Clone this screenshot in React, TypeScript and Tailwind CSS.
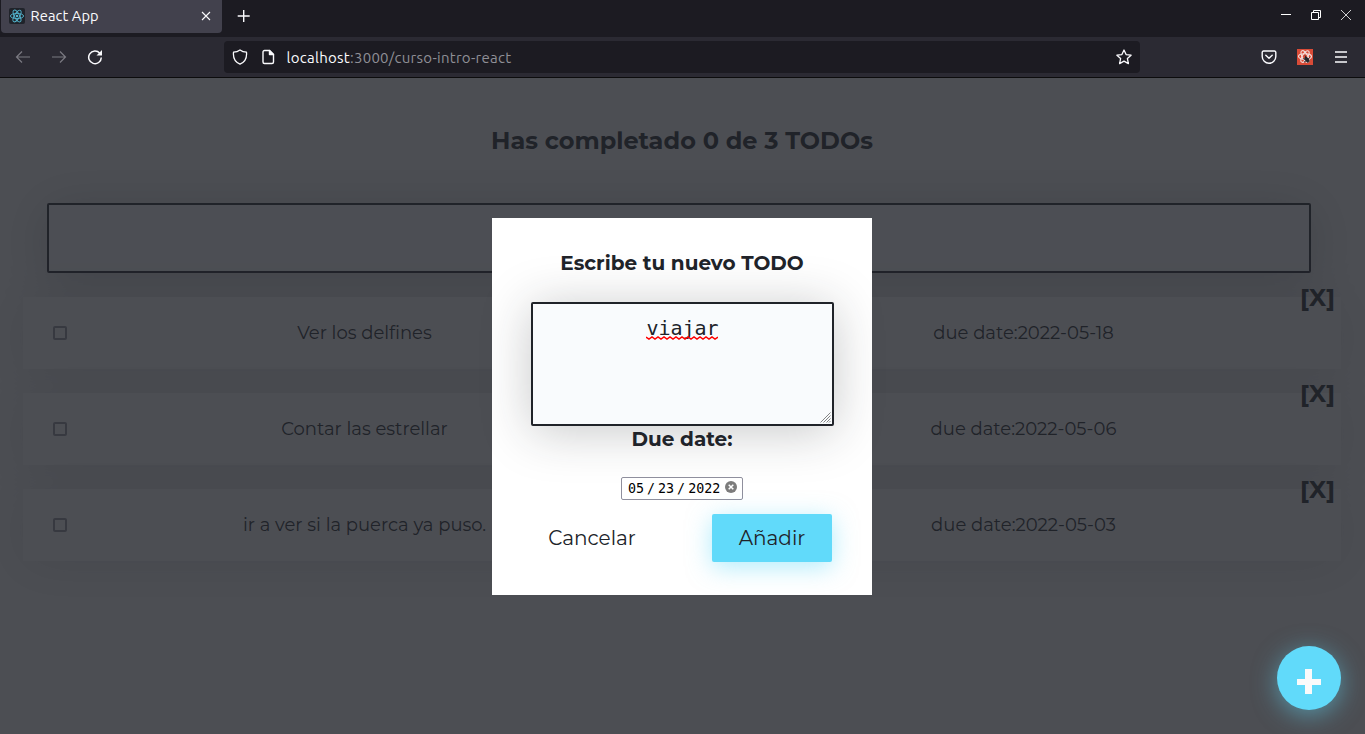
import React from "react";

const todos = [
  { text: "Ver los delfines", date: "2022-05-18" },
  { text: "Contar las estrellar", date: "2022-05-06" },
  { text: "ir a ver si la puerca ya puso.", date: "2022-05-03" },
];

function ReactLogo({ className, stroke }: { className: string; stroke: string }) {
  return (
    <svg viewBox="0 0 16 16" className={className} fill="none" stroke={stroke} strokeWidth="0.9">
      <ellipse cx="8" cy="8" rx="6.6" ry="2.6" />
      <ellipse cx="8" cy="8" rx="6.6" ry="2.6" transform="rotate(60 8 8)" />
      <ellipse cx="8" cy="8" rx="6.6" ry="2.6" transform="rotate(120 8 8)" />
      <circle cx="8" cy="8" r="1.3" fill={stroke} stroke="none" />
    </svg>
  );
}

function TabBar() {
  return (
    <div className="flex h-[37px] items-start bg-[#1c1b22] text-[#fbfbfe]">
      <div className="ml-px flex h-[33px] w-[221px] items-center rounded-b bg-[#42414d] pb-[2px] pl-2 pr-[10px]">
        <span className="size-4 rounded-xs bg-[#20232a]">
          <ReactLogo className="size-4" stroke="#53b5cf" />
        </span>
        <span className="ml-[5.5px] text-[14.667px] leading-5 tracking-[0.1px]">React App</span>
        <svg viewBox="0 0 12 12" className="ml-auto size-3" stroke="#fbfbfe" strokeWidth="1.1">
          <path d="M2 2l8 8M10 2l-8 8" />
        </svg>
      </div>
      <svg viewBox="0 0 14 14" className="ml-[15px] mt-[9px] size-[14px]" stroke="#fbfbfe" strokeWidth="1.4">
        <path d="M6.7 1v12M.7 7h12" />
      </svg>
      <div className="ml-auto flex gap-5 pr-[14px] pt-[10px]">
        <svg viewBox="0 0 10 10" className="size-[10px]" stroke="#fff">
          <path d="M0 4.5h10" />
        </svg>
        <svg viewBox="0 0 10 10" className="size-[10px]" fill="none" stroke="#fff">
          <path d="M.5 2.5h7v7h-7zM2.5 2.5v-2h7v7h-2" />
        </svg>
        <svg viewBox="0 0 10 10" className="size-[10px]" stroke="#fff" strokeWidth=".8">
          <path d="M0 0l10 10M10 0L0 10" />
        </svg>
      </div>
    </div>
  );
}

function Toolbar() {
  return (
    <div className="flex h-[41px] items-center border-b border-[#0c0c0d] bg-[#2b2a33]">
      <div className="flex w-[224px] gap-5 pl-[15px]">
        <svg viewBox="0 0 16 16" className="size-4" fill="none" stroke="#7b7a82" strokeWidth="1.2">
          <path d="M15 8H1.5M7 2.5L1.5 8 7 13.5" />
        </svg>
        <svg viewBox="0 0 16 16" className="size-4" fill="none" stroke="#7b7a82" strokeWidth="1.2">
          <path d="M1 8h13.5M9 2.5L14.500 8 9 13.500" />
        </svg>
        <svg viewBox="0 0 16 16" className="size-4" fill="none" stroke="#fbfbfe" strokeWidth="1.5">
          <path d="M14.300 8.500A6.300 6.300 0 1 1 12.800 4.300" />
          <path d="M15 1v5.500H9.500z" fill="#fbfbfe" stroke="none" />
        </svg>
      </div>
      <div className="flex h-8 w-[916px] items-center rounded bg-[#1c1b22] pl-2 pr-2">
        <svg viewBox="0 0 16 16" className="size-4" fill="none" stroke="#fbfbfe" strokeWidth="1.3" strokeLinejoin="round">
          <path d="M8 .9C6.500 2 4 3 1.500 3.200c-.5 5 1.500 10 6.500 12 5-2 7-7 6.500-12C12 3 9.500 2 8 .9z" />
        </svg>
        <svg viewBox="0 0 16 16" className="ml-3 size-4" fill="none" stroke="#fbfbfe" strokeWidth="1.4" strokeLinejoin="round">
          <path d="M9.500 1.500h-5a1.500 1.500 0 0 0-1.500 1.500v10a1.500 1.500 0 0 0 1.500 1.500h7.500a1.500 1.500 0 0 0 1.500-1.500V5.500z" />
          <path d="M9.500 1.500v4h4z" fill="#fbfbfe" />
        </svg>
        <span className="ml-[10.5px] mt-px text-[15px] leading-5 tracking-[0.27px] text-[#8f8f96]">
          <span className="text-[#fbfbfe]">localhost</span>:3000/curso-intro-react
        </span>
        <svg viewBox="0 0 16 16" className="ml-auto size-4" fill="none" stroke="#fbfbfe" strokeWidth="1.3" strokeLinejoin="round">
          <path d="M8 1l2.100 4.600 5 .6-3.700 3.400 1 5L8 12.100l-4.400 2.500 1-5L.9 6.200l5-.6z" />
        </svg>
      </div>
      <div className="ml-auto flex items-center gap-5 pr-4">
        <svg viewBox="0 0 16 16" className="size-4" fill="none" stroke="#fbfbfe" strokeWidth="1.400" strokeLinejoin="round" strokeLinecap="round">
          <path d="M2.500 2h11A1.300 1.300 0 0 1 14.800 3.300V7.500a6.800 6.800 0 0 1-13.600 0V3.300A1.300 1.300 0 0 1 2.500 2zM4.800 6.300L8 9.300l3.200-3" />
        </svg>
        <span className="size-4 bg-[#d94b37]">
          <svg viewBox="0 0 16 16" className="size-4" fill="none" stroke="#f3dedb" strokeWidth="1.100">
            <ellipse cx="8" cy="7.500" rx="6.500" ry="2.700" />
            <ellipse cx="8" cy="7.500" rx="6.500" ry="2.700" transform="rotate(60 8 7.500)" />
            <ellipse cx="8" cy="7.500" rx="6.500" ry="2.700" transform="rotate(120 8 7.500)" />
            <ellipse cx="9.800" cy="10.500" rx="1.900" ry="2.900" transform="rotate(-35 9.800 10.500)" fill="#24272b" stroke="none" />
            <path d="M6 9.500l2 1M7 13l2-1M13 8.500l-2 1.500M8 6.500l1 2M13 12h-2M11 14l-.5-2" stroke="#24272b" strokeWidth=".9" />
          </svg>
        </span>
        <svg viewBox="0 0 16 16" className="size-4" stroke="#fbfbfe" strokeWidth="1.300">
          <path d="M2 3h12M2 8h12M2 13h12" />
        </svg>
      </div>
    </div>
  );
}

function TodoRow({ text, date }: { text: string; date: string }) {
  return (
    <li className="relative flex h-[72px] items-center bg-[#fafafa] shadow-[0_5px_50px_rgba(32,35,41,0.15)]">
      <span className="ml-[30px] size-[14px] shrink-0 rounded-[2px] border-2 border-[#8f8f9d]" />
      <span className="w-[595px] text-center text-[18px]">{text}</span>
      <span className="ml-[63px] w-[597px] text-center text-[18px]">due date:{date}</span>
      <span className="absolute right-[6px] top-[-14px] text-[24px] font-bold leading-[30px]">[X]</span>
    </li>
  );
}

function TodoModal() {
  return (
    <div className="flex h-[377px] w-[380px] flex-col items-center bg-white">
      <h3 className="relative z-10 mt-[30px] whitespace-nowrap text-[20px] font-bold leading-[30px]">Escribe tu nuevo TODO</h3>
      <div className="relative ml-[1px] mt-6 h-[124px] w-[303px] rounded-[2px] border-2 border-[#202329] bg-[#f9fbfd] pt-3 text-center font-['DejaVu_Sans_Mono',monospace] text-[20px] leading-6 shadow-[0_5px_50px_rgba(32,35,41,0.25)]">
        <span className="relative inline-block">
          viajar
          <svg viewBox="0 0 72 4" className="absolute left-0 top-[20px] h-1 w-[72px]" fill="none" stroke="#f00" strokeWidth="1.500">
            <path d="M0 1l3 2 3-2 3 2 3-2 3 2 3-2 3 2 3-2 3 2 3-2 3 2 3-2 3 2 3-2 3 2 3-2 3 2 3-2 3 2 3-2 3 2 3-2 3 2 3-2" />
          </svg>
        </span>
        <svg viewBox="0 0 11 11" className="absolute bottom-px right-px size-[11px]" stroke="#777" strokeWidth=".9">
          <path d="M0.500 10.500l10-10M3.500 10.500l7-7M6.500 10.500l4-4M9 10.500l1.500-1.500" />
        </svg>
      </div>
      <p className="relative -mt-[1px] text-[20px] font-bold leading-7">Due date:</p>
      <div className="relative mt-6 flex h-[23px] w-[122px] items-center rounded-[2px] border border-[#8f8f9d] bg-white pl-[6px] font-['DejaVu_Sans_Mono',monospace] text-[13.333px] leading-none text-black">
        <span>05</span>
        <span className="w-[14px] text-center">/</span>
        <span>23</span>
        <span className="w-[14px] text-center">/</span>
        <span>2022</span>
        <svg viewBox="0 0 12 12" className="mb-[3px] ml-[5px] size-3 shrink-0">
          <circle cx="6" cy="6" r="6" fill="#7c7c7c" />
          <path d="M3.700 3.700l4.600 4.600M8.300 3.700L3.700 8.300" stroke="#fff" strokeWidth="1.500" />
        </svg>
      </div>
      <div className="relative mt-[14px] flex w-[300px] justify-between">
        <button className="h-12 w-[120px] text-[20px]">Cancelar</button>
        <button className="h-12 w-[120px] rounded-[2px] bg-[#61dafa] text-[20px] shadow-[0_5px_25px_rgba(97,218,250,0.5)]">Añadir</button>
      </div>
    </div>
  );
}

export default function App() {
  return (
    <div className="flex h-[734px] w-[1365px] flex-col overflow-hidden font-['Ubuntu','Noto_Sans',sans-serif]">
      <TabBar />
      <Toolbar />
      <main className="relative flex-1 overflow-hidden bg-[#fafafa] font-['Montserrat','Inter',sans-serif] text-[#202329]">
        <h2 className="pr-px pt-12 text-center text-[24px] font-bold leading-[30px]">Has completado 0 de 3 TODOs</h2>
        <div className="ml-[47px] mt-[47px] h-[70px] w-[1264px] rounded-[2px] border-2 border-[#202329] bg-[#f9fbfd] shadow-[0_5px_50px_rgba(32,35,41,0.25)]" />
        <ul className="ml-[23px] mt-6 flex w-[1318px] flex-col gap-6">
          {todos.map((todo) => (
            <TodoRow key={todo.text} {...todo} />
          ))}
        </ul>
        <div className="absolute inset-0 flex items-center justify-center bg-[rgba(32,35,41,0.8)] pr-px pt-px">
          <TodoModal />
        </div>
        <button className="absolute bottom-6 right-6 flex size-16 items-center justify-center rounded-full bg-[#61dafa] shadow-[0_5px_25px_rgba(97,218,250,0.5)]" aria-label="+">
          <svg viewBox="0 0 24 25" className="mt-[7px] h-[25px] w-6" fill="#fafafa">
            <path d="M8 0h7v10h9v6h-9v9H8v-9H0v-6h8z" />
          </svg>
        </button>
      </main>
    </div>
  );
}
